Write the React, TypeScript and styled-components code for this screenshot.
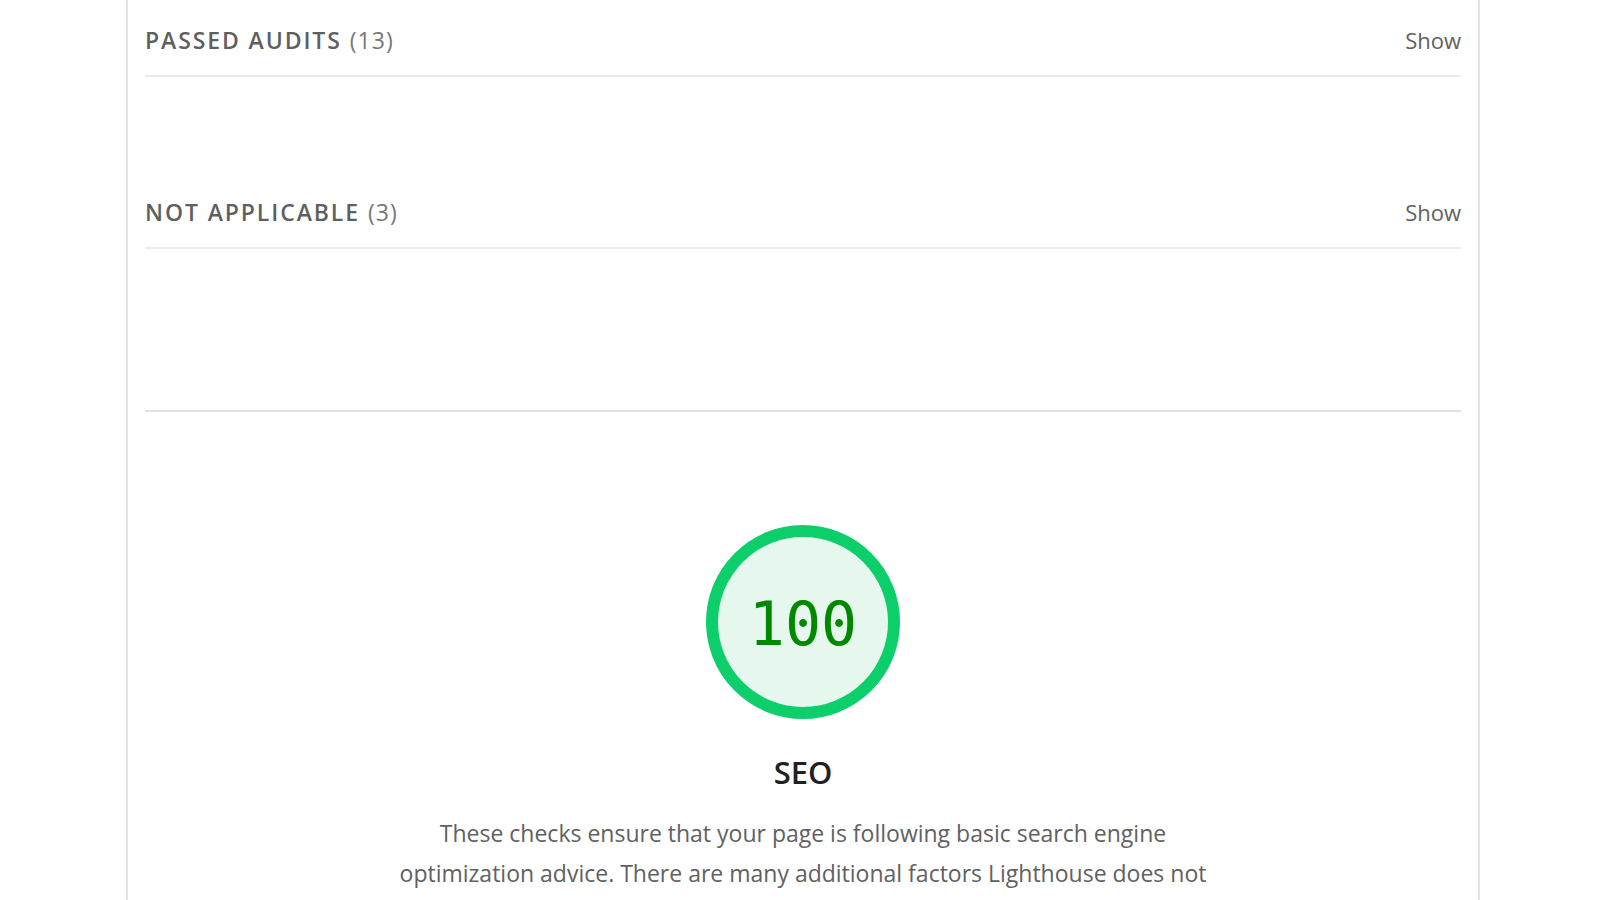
import React from 'react'
import styled, { createGlobalStyle } from 'styled-components'

const GlobalStyle = createGlobalStyle`
  html, body {
    margin: 0;
    padding: 0;
    background: #ffffff;
    overflow: hidden;
  }
  body {
    font-family: "Open Sans", "Noto Sans", "Liberation Sans", sans-serif;
    color: #212121;
  }
`

interface GroupInfo {
  title: string
  count: number
}

const groups: GroupInfo[] = [
  { title: 'Passed audits', count: 13 },
  { title: 'Not applicable', count: 3 },
]

const AuditGroup: React.FC<GroupInfo> = ({ title, count }) => (
  <GroupBlock>
    <GroupHeader>
      <GroupTitle>
        {title}
        <GroupCount>({count})</GroupCount>
      </GroupTitle>
      <ShowToggle>Show</ShowToggle>
    </GroupHeader>
  </GroupBlock>
)

const Gauge: React.FC<{ score: number }> = ({ score }) => (
  <GaugeWrap>
    <svg width="194" height="194" viewBox="0 0 194 194">
      <circle cx="97" cy="97" r="91" fill="#e6f8ee" stroke="#0cce6b" strokeWidth="12" />
    </svg>
    <GaugeScore>{score}</GaugeScore>
  </GaugeWrap>
)

const App: React.FC = () => {
  return (
    <>
      <GlobalStyle />
      <Page>
        <Report>
          {groups.map(g => (
            <AuditGroup key={g.title} title={g.title} count={g.count} />
          ))}
          <Divider />
          <CategoryHeader>
            <Gauge score={100} />
            <CategoryTitle>SEO</CategoryTitle>
            <CategoryDescription>
              These checks ensure that your page is following basic search engine
              optimization advice. There are many additional factors Lighthouse does not
              score here that may affect your search ranking, including performance on
              Core Web Vitals. Learn more.
            </CategoryDescription>
          </CategoryHeader>
        </Report>
      </Page>
    </>
  )
}

const Page = styled.div`
  width: 100%;
  height: 900px;
  display: flex;
  align-items: flex-start;
  justify-content: center;
  padding-left: 6px;
  box-sizing: border-box;
`

const Report = styled.div`
  width: 1354px;
  min-height: 100%;
  border-left: 2px solid #e3e3e3;
  border-right: 2px solid #e3e3e3;
  padding: 5px 17px 0 17px;
  box-sizing: border-box;
`

const GroupBlock = styled.div`
  margin-bottom: 100px;
`

const GroupHeader = styled.div`
  height: 70px;
  display: flex;
  align-items: center;
  justify-content: space-between;
  border-bottom: 2px solid #ebebeb;
`

const GroupTitle = styled.div`
  font-size: 23px;
  font-weight: 600;
  letter-spacing: 1.9px;
  text-transform: uppercase;
  color: #5f5f5f;
`

const GroupCount = styled.span`
  margin-left: 8px;
  font-weight: 400;
  color: #777777;
  letter-spacing: 1px;
`

const ShowToggle = styled.div`
  font-size: 22px;
  color: #616161;
`

/* last group's bottom margin collapses into this one */
const Divider = styled.div`
  height: 2px;
  background: #e2e2e2;
  margin-top: 161px;
`

const CategoryHeader = styled.div`
  display: flex;
  flex-direction: column;
  align-items: center;
  padding-top: 113px;
`

const GaugeWrap = styled.div`
  position: relative;
  width: 194px;
  height: 194px;
`

const GaugeScore = styled.div`
  position: absolute;
  inset: 0;
  display: flex;
  align-items: center;
  justify-content: center;
  padding-top: 4px;
  font-family: "DejaVu Sans Mono", "Liberation Mono", monospace;
  font-size: 60px;
  color: #008800;
`

const CategoryTitle = styled.div`
  margin-top: 32px;
  font-size: 31px;
  font-weight: 600;
  color: #212121;
`

const CategoryDescription = styled.div`
  margin-top: 20px;
  max-width: 830px;
  text-align: center;
  font-size: 23px;
  line-height: 40px;
  color: #616161;
`

export default App
